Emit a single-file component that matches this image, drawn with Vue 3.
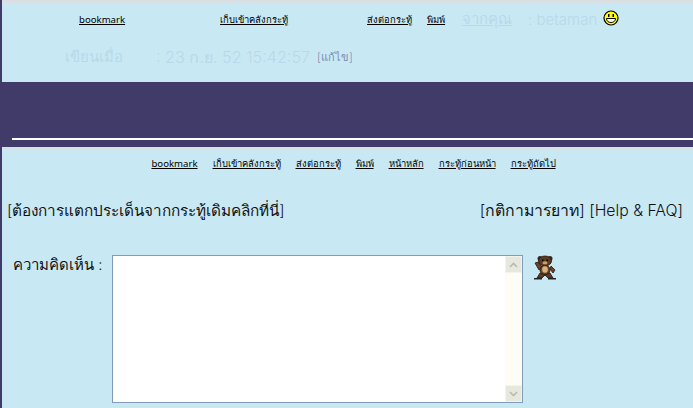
<script setup>
const bottomLinks = ["เก็บเข้าคลังกระทู้", "ส่งต่อกระทู้", "พิมพ์", "หน้าหลัก", "กระทู้ก่อนหน้า", "กระทู้ถัดไป"];
</script>

<template>
  <div class="page">
    <div class="topPanel">
      <div class="topRow">
        <a class="navLink latin bookmarkTop">bookmark</a>
        <a class="navLink storeTop">เก็บเข้าคลังกระทู้</a>
        <a class="navLink sendTop">ส่งต่อกระทู้</a>
        <a class="navLink printTop">พิมพ์</a>
        <a class="fromLink">จากคุณ</a>
        <span class="fromName">: betaman</span>
        <svg class="smiley" width="16" height="16" viewBox="0 0 16 16">
          <circle cx="8" cy="8" r="7" fill="#ffff00" stroke="#000" stroke-width="1.2" />
          <rect x="5" y="4" width="1.500" height="3" fill="#000" />
          <rect x="9.500" y="4" width="1.500" height="3" fill="#000" />
          <path d="M3.500 8.500h9c0 2.600-2 4-4.500 4s-4.500-1.400-4.500-4z" fill="#fff" stroke="#000" />
        </svg>
      </div>
      <div class="dateRow">
        <span class="dateLabel">เขียนเมื่อ</span>
        <span class="dateValue">: 23 ก.ย. 52 15:42:57</span>
        <span class="editLink">[แก้ไข]</span>
      </div>
    </div>
    <div class="band">
      <div class="bandLine"></div>
    </div>
    <div class="bottomPanel">
      <div class="bottomNav">
        <a class="navLink latin">bookmark</a>
        <a v-for="link in bottomLinks" :key="link" class="navLink">{{ link }}</a>
      </div>
      <div class="infoRow">
        <span class="infoLeft">[ต้องการแตกประเด็นจากกระทู้เดิมคลิกที่นี่]</span>
        <span class="infoRight">[กติกามารยาท] [Help &amp; FAQ]</span>
      </div>
      <div class="commentRow">
        <div class="commentLabel">ความคิดเห็น :</div>
        <div class="commentBox">
          <div class="commentText"></div>
          <div class="scrollbar">
            <div class="scrollBtn">
              <svg width="9" height="6" viewBox="0 0 9 6"><path d="M1 5l3.500-3.500 3.500 3.500" fill="none" stroke="#b4bcb4" stroke-width="1.600" /></svg>
            </div>
            <div class="scrollBtn">
              <svg width="9" height="6" viewBox="0 0 9 6"><path d="M1 1l3.500 3.500 3.500-3.500" fill="none" stroke="#b4bcb4" stroke-width="1.600" /></svg>
            </div>
          </div>
        </div>
        <svg class="bear" width="26" height="26" viewBox="0 0 26 26">
          <circle cx="8" cy="3.500" r="2.500" fill="#3a2a20" />
          <circle cx="18" cy="3.500" r="2.500" fill="#3a2a20" />
          <path d="M3 8l3-1 4 5-3 3z" fill="#6b4426" stroke="#22170f" stroke-width="0.800" />
          <path d="M23 15l-4-4-1 3 3 4z" fill="#6b4426" stroke="#22170f" stroke-width="0.800" />
          <ellipse cx="13" cy="6" rx="6.500" ry="5" fill="#5d3a22" stroke="#22170f" stroke-width="0.800" />
          <ellipse cx="13" cy="8" rx="2.500" ry="1.800" fill="#c9a06a" />
          <rect x="10" y="4.500" width="1.500" height="1.500" fill="#000" />
          <rect x="14.500" y="4.500" width="1.500" height="1.500" fill="#000" />
          <ellipse cx="13" cy="15" rx="5" ry="5" fill="#6b4426" stroke="#22170f" stroke-width="0.800" />
          <ellipse cx="13" cy="14.500" rx="2.800" ry="3.200" fill="#d8b47c" />
          <path d="M8 18l-3 5h5l3-3z" fill="#5d3a22" stroke="#22170f" stroke-width="0.800" />
          <path d="M18 18l3 5h-5l-3-3z" fill="#5d3a22" stroke="#22170f" stroke-width="0.800" />
          <rect x="2" y="23" width="8" height="1.500" fill="#22222e" />
          <rect x="16" y="23" width="8" height="1.500" fill="#22222e" />
        </svg>
      </div>
    </div>
  </div>
</template>

<style scoped>
.page {
  width: 693px;
  height: 408px;
  overflow: hidden;
  background: #413b69;
  font-family: "Inter", "Noto Sans", "DejaVu Sans", sans-serif;
  display: flex;
  flex-direction: column;
}
.topPanel {
  height: 82px;
  flex-shrink: 0;
  margin-left: 2px;
  background: #c8e9f4;
  border-top: 3px solid #d8e0e4;
  box-sizing: border-box;
  padding-top: 6px;
}
.topRow {
  display: flex;
  align-items: center;
  height: 20px;
}
.navLink {
  font-family: "Noto Sans", sans-serif;
  font-size: 9.4px;
  color: #000;
  text-decoration: underline;
  white-space: nowrap;
}
.latin {
  font-size: 9.6px;
}
.bookmarkTop {
  margin-left: 77px;
}
.storeTop {
  margin-left: 95px;
}
.sendTop {
  margin-left: 79px;
}
.printTop {
  margin-left: 15px;
}
.fromLink {
  margin-left: 17px;
  font-size: 15px;
  color: #b9d8e9;
  text-decoration: underline;
}
.fromName {
  margin-left: 16px;
  font-size: 15px;
  font-weight: 300;
  color: #b9d8e9;
}
.smiley {
  margin-left: 6px;
  margin-top: -3px;
}
.dateRow {
  display: flex;
  align-items: center;
  margin-top: 18px;
  height: 20px;
  color: #b9d8e9;
  font-size: 15px;
  font-weight: 300;
}
.dateLabel {
  margin-left: 63px;
}
.dateValue {
  margin-left: 33px;
  font-size: 16.200px;
}
.editLink {
  margin-left: 7px;
  font-size: 11px;
  color: #7d8bb0;
}
.band {
  height: 65px;
  flex-shrink: 0;
  display: flex;
  flex-direction: column;
  justify-content: flex-end;
  padding-left: 12px;
}
.bandLine {
  height: 2px;
  background: #fff;
  margin-bottom: 7px;
}
.bottomPanel {
  flex: 1;
  margin-left: 2px;
  background: #c8e9f4;
  border-top: 2px solid #d8e0e4;
  box-sizing: border-box;
  padding: 7px 10px 0 5px;
}
.bottomNav {
  display: flex;
  justify-content: center;
  gap: 15px;
  height: 14px;
  align-items: center;
  padding-left: 17px;
}
.infoRow {
  display: flex;
  justify-content: space-between;
  margin-top: 28px;
  font-weight: 300;
  color: #111;
}
.infoLeft {
  font-size: 15.300px;
}
.infoRight {
  font-size: 15.800px;
}
.commentRow {
  display: flex;
  align-items: flex-start;
  margin-top: 32px;
}
.commentLabel {
  width: 105px;
  box-sizing: border-box;
  padding: 0 0 0 6px;
  margin-top: -2px;
  font-size: 15px;
  font-weight: 300;
  color: #111;
  white-space: nowrap;
}
.commentBox {
  width: 411px;
  height: 148px;
  box-sizing: border-box;
  border: 1px solid #7f9db9;
  background: #fff;
  display: flex;
  flex-shrink: 0;
}
.commentText {
  flex: 1;
}
.scrollbar {
  width: 17px;
  background: #fdfdf6;
  display: flex;
  flex-direction: column;
  justify-content: space-between;
}
.scrollBtn {
  height: 17px;
  background: #e6e8de;
  border: 1px solid #f4f4ee;
  box-sizing: border-box;
  display: flex;
  align-items: center;
  justify-content: center;
}
.bear {
  margin-left: 9px;
}
</style>
